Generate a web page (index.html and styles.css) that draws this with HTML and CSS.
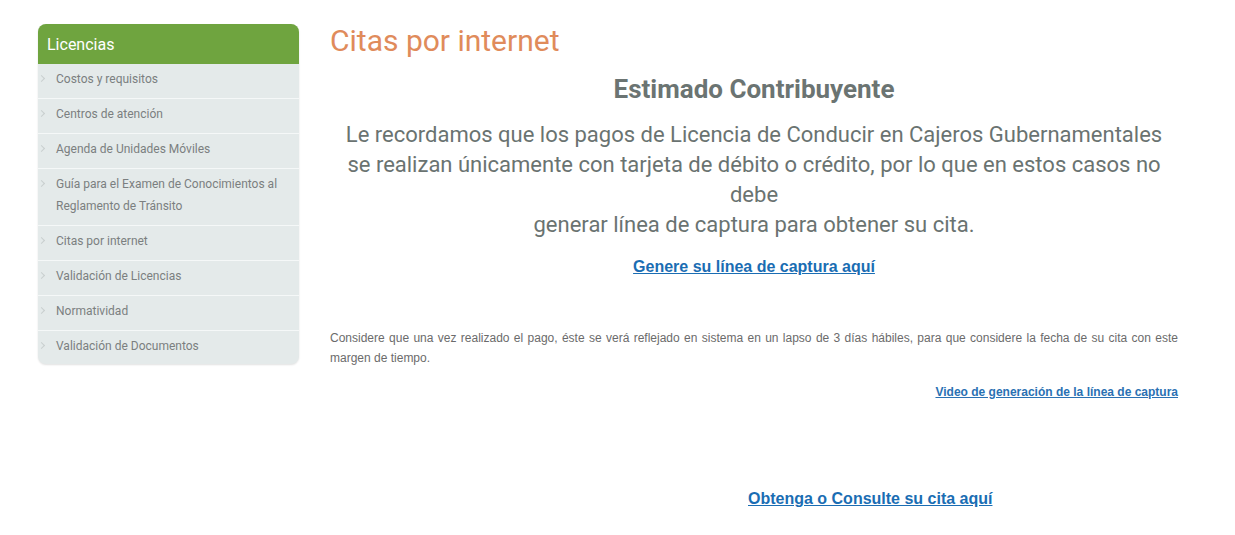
FILE: index.html
```html
<!DOCTYPE html>
<html lang="es">
<head>
<meta charset="utf-8">
<title>Citas por internet</title>
<link rel="stylesheet" href="styles.css">
</head>
<body>
<div class="page">
  <aside class="sidebar">
    <div class="side-head">Licencias</div>
    <ul class="side-list">
      <li class="side-item">Costos y requisitos</li>
      <li class="side-item">Centros de atención</li>
      <li class="side-item">Agenda de Unidades Móviles</li>
      <li class="side-item">Guía para el Examen de Conocimientos al Reglamento de Tránsito</li>
      <li class="side-item">Citas por internet</li>
      <li class="side-item">Validación de Licencias</li>
      <li class="side-item">Normatividad</li>
      <li class="side-item">Validación de Documentos</li>
    </ul>
  </aside>
  <main class="main">
    <h1 class="title">Citas por internet</h1>
    <h2 class="greet">Estimado Contribuyente</h2>
    <p class="notice">Le recordamos que los pagos de Licencia de Conducir en Cajeros Gubernamentales<br>se realizan únicamente con tarjeta de débito o crédito, por lo que en estos casos no debe<br>generar línea de captura para obtener su cita.</p>
    <p class="center-link"><a href="#" class="big-link">Genere su línea de captura aquí</a></p>
    <p class="small">Considere que una vez realizado el pago, éste se verá reflejado en sistema en un lapso de 3 días hábiles, para que considere la fecha de su cita con este margen de tiempo.</p>
    <p class="right-link"><a href="#" class="small-link">Video de generación de la línea de captura</a></p>
    <p class="cita-link"><a href="#" class="big-link">Obtenga o Consulte su cita aquí</a></p>
  </main>
</div>
</body>
</html>
```
FILE: styles.css
```css
* { box-sizing: border-box; }
html, body { margin: 0; padding: 0; background: #fff; }
body { font-family: Roboto, "Liberation Sans", Arial, sans-serif; }

.page {
  display: flex;
  align-items: flex-start;
  padding: 24px 0 0 38px;
  gap: 31px;
}

.sidebar {
  width: 261px;
  flex: none;
  background: #e4eaea;
  border-radius: 8px;
  box-shadow: 0 1px 2px rgba(0,0,0,0.12);
  overflow: hidden;
}
.side-head {
  background: #6fa43f;
  color: #fff;
  font-size: 16px;
  height: 40px;
  line-height: 41px;
  padding-left: 9px;
}
.side-list { list-style: none; margin: 0; padding: 0; }
.side-item {
  position: relative;
  font-size: 12px;
  color: #7b7f80;
  line-height: 22px;
  padding: 4px 10px 8px 18px;
  border-bottom: 1px solid #f5f8f8;
}
.side-item:last-child { border-bottom: none; padding-bottom: 7px; }
.side-item::before {
  content: "";
  position: absolute;
  left: 1px;
  top: 12px;
  width: 4px;
  height: 4px;
  border-top: 1px solid #c9cfcf;
  border-right: 1px solid #c9cfcf;
  transform: rotate(45deg);
}

.main {
  width: 848px;
  flex: none;
}
.title {
  margin: 0;
  font-weight: 400;
  font-size: 30px;
  line-height: 34px;
  color: #e08b5b;
}
.greet {
  margin: 15px 0 0;
  text-align: center;
  font-size: 26px;
  font-weight: 700;
  line-height: 32px;
  color: #6b7472;
}
.notice {
  margin: 15px 0 0;
  text-align: center;
  font-size: 22px;
  line-height: 30px;
  color: #6a7371;
}
.center-link {
  margin: 17px 0 0;
  text-align: center;
  line-height: 20px;
}
.big-link {
  font-family: "Liberation Sans", Arial, sans-serif;
  font-weight: 700;
  font-size: 16px;
  color: #1a6db3;
  text-decoration: underline;
}
.small {
  margin: 51px 0 0;
  font-family: "Liberation Sans", Arial, sans-serif;
  font-size: 12px;
  line-height: 20px;
  color: #6b6b6b;
  text-align: justify;
}
.right-link {
  margin: 13px 0 0;
  text-align: right;
  line-height: 20px;
}
.small-link {
  font-family: "Liberation Sans", Arial, sans-serif;
  font-weight: 700;
  font-size: 12px;
  color: #2a71b3;
  text-decoration: underline;
}
.cita-link {
  margin: 87px 0 0;
  padding-left: 418px;
  line-height: 20px;
}
```
